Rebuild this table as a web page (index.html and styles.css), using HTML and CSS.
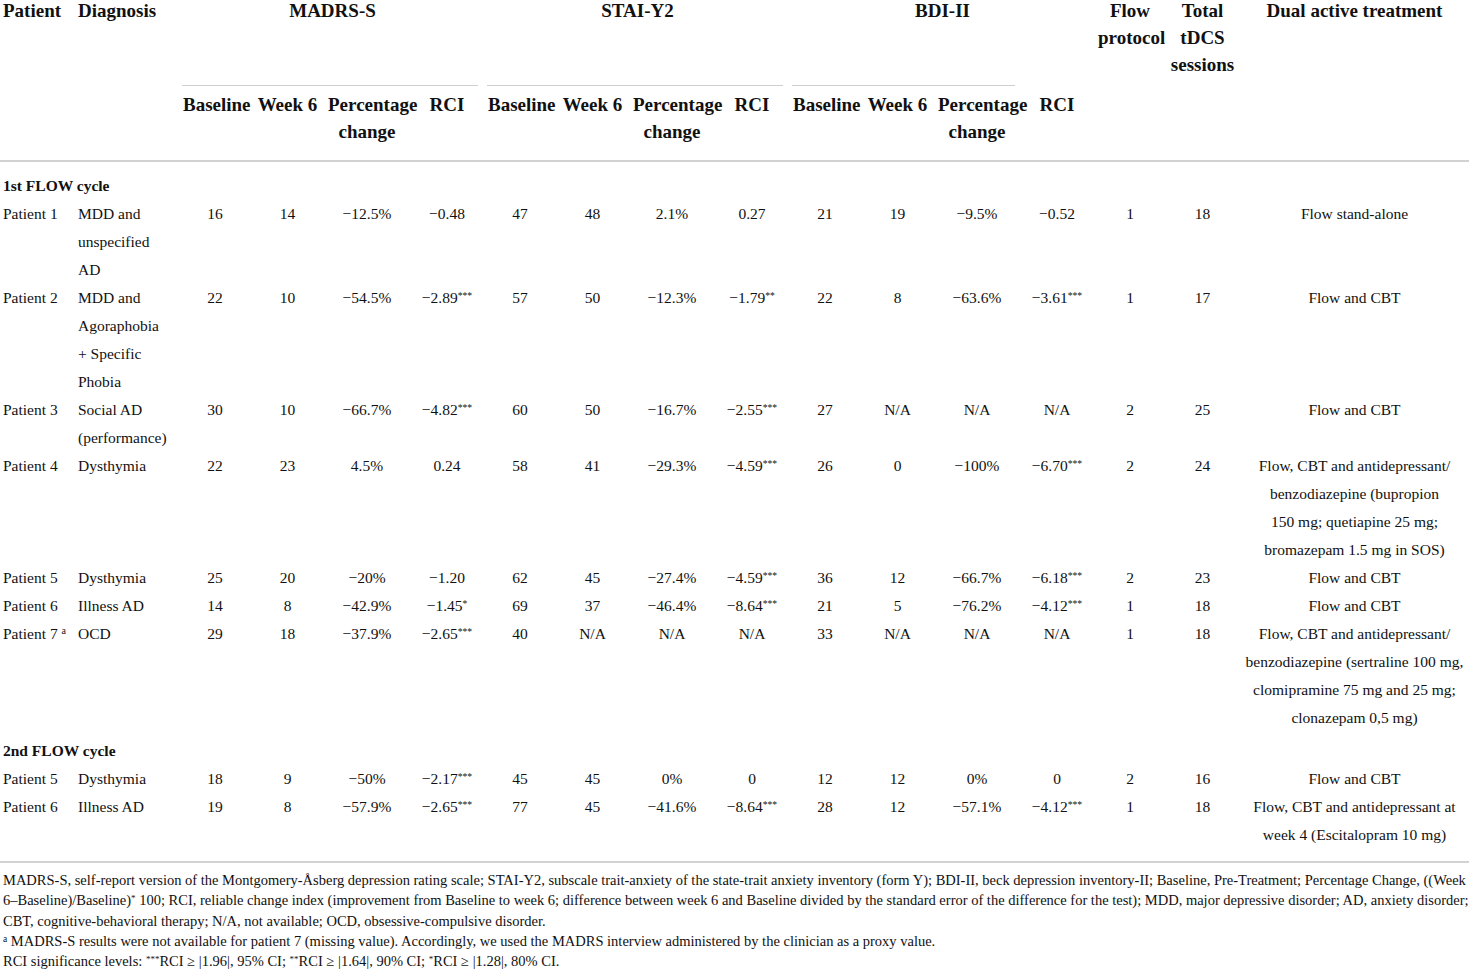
FILE: index.html
```html
<!DOCTYPE html>
<html>
<head>
<meta charset="utf-8">
<link rel="stylesheet" href="styles.css">
</head>
<body>
<div class="wrap">
<table class="tbl">
  <colgroup>
    <col class="c-pat"><col class="c-dia">
    <col class="c-b"><col class="c-w"><col class="c-p"><col class="c-r">
    <col class="c-b"><col class="c-w"><col class="c-p"><col class="c-r">
    <col class="c-b"><col class="c-w"><col class="c-p"><col class="c-r">
    <col class="c-fp"><col class="c-tot"><col class="c-dual">
  </colgroup>
  <thead>
    <tr>
      <th rowspan="2" class="left">Patient</th>
      <th rowspan="2" class="left">Diagnosis</th>
      <th colspan="4" class="grp"><div class="grp-label">MADRS-S</div><div class="grp-rule"></div></th>
      <th colspan="4" class="grp"><div class="grp-label">STAI-Y2</div><div class="grp-rule"></div></th>
      <th colspan="4" class="grp"><div class="grp-label">BDI-II</div><div class="grp-rule short"></div></th>
      <th rowspan="2">Flow<br>protocol</th>
      <th rowspan="2">Total<br>tDCS<br>sessions</th>
      <th rowspan="2">Dual active treatment</th>
    </tr>
    <tr class="sub">
      <th>Baseline</th><th>Week 6</th><th>Percentage<br>change</th><th>RCI</th>
      <th>Baseline</th><th>Week 6</th><th>Percentage<br>change</th><th>RCI</th>
      <th>Baseline</th><th>Week 6</th><th>Percentage<br>change</th><th>RCI</th>
    </tr>
  </thead>
  <tbody>
    <tr class="section first"><td colspan="17">1st FLOW cycle</td></tr>
    <tr>
      <td class="left">Patient 1</td><td class="left">MDD and<br>unspecified<br>AD</td>
      <td>16</td><td>14</td><td>−12.5%</td><td>−0.48</td>
      <td>47</td><td>48</td><td>2.1%</td><td>0.27</td>
      <td>21</td><td>19</td><td>−9.5%</td><td>−0.52</td>
      <td>1</td><td>18</td><td>Flow stand-alone</td>
    </tr>
    <tr>
      <td class="left">Patient 2</td><td class="left">MDD and<br>Agoraphobia<br>+ Specific<br>Phobia</td>
      <td>22</td><td>10</td><td>−54.5%</td><td>−2.89<sup>***</sup></td>
      <td>57</td><td>50</td><td>−12.3%</td><td>−1.79<sup>**</sup></td>
      <td>22</td><td>8</td><td>−63.6%</td><td>−3.61<sup>***</sup></td>
      <td>1</td><td>17</td><td>Flow and CBT</td>
    </tr>
    <tr>
      <td class="left">Patient 3</td><td class="left">Social AD<br>(performance)</td>
      <td>30</td><td>10</td><td>−66.7%</td><td>−4.82<sup>***</sup></td>
      <td>60</td><td>50</td><td>−16.7%</td><td>−2.55<sup>***</sup></td>
      <td>27</td><td>N/A</td><td>N/A</td><td>N/A</td>
      <td>2</td><td>25</td><td>Flow and CBT</td>
    </tr>
    <tr>
      <td class="left">Patient 4</td><td class="left">Dysthymia</td>
      <td>22</td><td>23</td><td>4.5%</td><td>0.24</td>
      <td>58</td><td>41</td><td>−29.3%</td><td>−4.59<sup>***</sup></td>
      <td>26</td><td>0</td><td>−100%</td><td>−6.70<sup>***</sup></td>
      <td>2</td><td>24</td><td>Flow, CBT and antidepressant/<br>benzodiazepine (bupropion<br>150 mg; quetiapine 25 mg;<br>bromazepam 1.5 mg in SOS)</td>
    </tr>
    <tr>
      <td class="left">Patient 5</td><td class="left">Dysthymia</td>
      <td>25</td><td>20</td><td>−20%</td><td>−1.20</td>
      <td>62</td><td>45</td><td>−27.4%</td><td>−4.59<sup>***</sup></td>
      <td>36</td><td>12</td><td>−66.7%</td><td>−6.18<sup>***</sup></td>
      <td>2</td><td>23</td><td>Flow and CBT</td>
    </tr>
    <tr>
      <td class="left">Patient 6</td><td class="left">Illness AD</td>
      <td>14</td><td>8</td><td>−42.9%</td><td>−1.45<sup>*</sup></td>
      <td>69</td><td>37</td><td>−46.4%</td><td>−8.64<sup>***</sup></td>
      <td>21</td><td>5</td><td>−76.2%</td><td>−4.12<sup>***</sup></td>
      <td>1</td><td>18</td><td>Flow and CBT</td>
    </tr>
    <tr>
      <td class="left">Patient 7 <sup class="fn">a</sup></td><td class="left">OCD</td>
      <td>29</td><td>18</td><td>−37.9%</td><td>−2.65<sup>***</sup></td>
      <td>40</td><td>N/A</td><td>N/A</td><td>N/A</td>
      <td>33</td><td>N/A</td><td>N/A</td><td>N/A</td>
      <td>1</td><td>18</td><td>Flow, CBT and antidepressant/<br>benzodiazepine (sertraline 100 mg,<br>clomipramine 75 mg and 25 mg;<br>clonazepam 0,5 mg)</td>
    </tr>
    <tr class="section"><td colspan="17">2nd FLOW cycle</td></tr>
    <tr>
      <td class="left">Patient 5</td><td class="left">Dysthymia</td>
      <td>18</td><td>9</td><td>−50%</td><td>−2.17<sup>***</sup></td>
      <td>45</td><td>45</td><td>0%</td><td>0</td>
      <td>12</td><td>12</td><td>0%</td><td>0</td>
      <td>2</td><td>16</td><td>Flow and CBT</td>
    </tr>
    <tr class="last">
      <td class="left">Patient 6</td><td class="left">Illness AD</td>
      <td>19</td><td>8</td><td>−57.9%</td><td>−2.65<sup>***</sup></td>
      <td>77</td><td>45</td><td>−41.6%</td><td>−8.64<sup>***</sup></td>
      <td>28</td><td>12</td><td>−57.1%</td><td>−4.12<sup>***</sup></td>
      <td>1</td><td>18</td><td>Flow, CBT and antidepressant at<br>week 4 (Escitalopram 10 mg)</td>
    </tr>
  </tbody>
</table>
<div class="notes">
  <p class="line">MADRS-S, self-report version of the Montgomery-Åsberg depression rating scale; STAI-Y2, subscale trait-anxiety of the state-trait anxiety inventory (form Y); BDI-II, beck depression inventory-II; Baseline, Pre-Treatment; Percentage Change, ((Week</p>
  <p class="line">6–Baseline)/Baseline)<sup>*</sup> 100; RCI, reliable change index (improvement from Baseline to week 6; difference between week 6 and Baseline divided by the standard error of the difference for the test); MDD, major depressive disorder; AD, anxiety disorder;</p>
  <p class="line">CBT, cognitive-behavioral therapy; N/A, not available; OCD, obsessive-compulsive disorder.</p>
  <p class="line"><sup class="fn">a</sup> MADRS-S results were not available for patient 7 (missing value). Accordingly, we used the MADRS interview administered by the clinician as a proxy value.</p>
  <p class="line">RCI significance levels: <sup>***</sup>RCI ≥ |1.96|, 95% CI; <sup>**</sup>RCI ≥ |1.64|, 90% CI; <sup>*</sup>RCI ≥ |1.28|, 80% CI.</p>
</div>
</div>
</body>
</html>
```

FILE: styles.css
```css
html, body {
  margin: 0;
  padding: 0;
  background: #ffffff;
}
body {
  font-family: "Liberation Serif", "Times New Roman", serif;
  color: #111111;
  width: 1469px;
}
.wrap {
  margin-top: -3px;
}
.tbl {
  width: 1469px;
  table-layout: fixed;
  border-collapse: collapse;
  border-spacing: 0;
}
.c-pat { width: 75px; }
.c-dia { width: 105px; }
.c-b { width: 70px; }
.c-w { width: 75px; }
.c-p { width: 84px; }
.c-r { width: 76px; }
.c-fp { width: 70px; }
.c-tot { width: 75px; }
.c-dual { width: 229px; }

.tbl th {
  font-weight: bold;
  font-size: 19px;
  line-height: 27px;
  padding: 0 3px;
  text-align: center;
  vertical-align: top;
  white-space: nowrap;
}
.tbl th.left, .tbl td.left {
  text-align: left;
}
.tbl th.grp {
  padding: 0;
}
.grp-label {
  height: 88px;
}
.grp-rule {
  height: 1px;
  background: #cfcfcf;
  margin: 0 7px 0 2px;
}
.grp-rule.short {
  margin-right: 80px;
}
.tbl tr.sub th {
  padding-top: 5px;
  padding-bottom: 15px;
}
.tbl thead {
  border-bottom: 2px solid #d2d2d2;
}
.tbl td {
  font-size: 15.5px;
  line-height: 28px;
  padding: 0 3px;
  text-align: center;
  vertical-align: top;
  white-space: nowrap;
}
.tbl tr.section td {
  text-align: left;
  font-weight: bold;
  padding-top: 5px;
}
.tbl tr.section.first td {
  padding-top: 10px;
}
.tbl tr.last td {
  padding-bottom: 12px;
}
.tbl tbody {
  border-bottom: 2px solid #d2d2d2;
}
sup {
  font-size: 0.62em;
  line-height: 0;
  vertical-align: 0.45em;
}
sup.fn {
  font-size: 0.65em;
}
.notes {
  padding: 7px 3px 0 3px;
}
.line {
  margin: 0;
  font-size: 14.5px;
  line-height: 20.25px;
  white-space: nowrap;
}
```
